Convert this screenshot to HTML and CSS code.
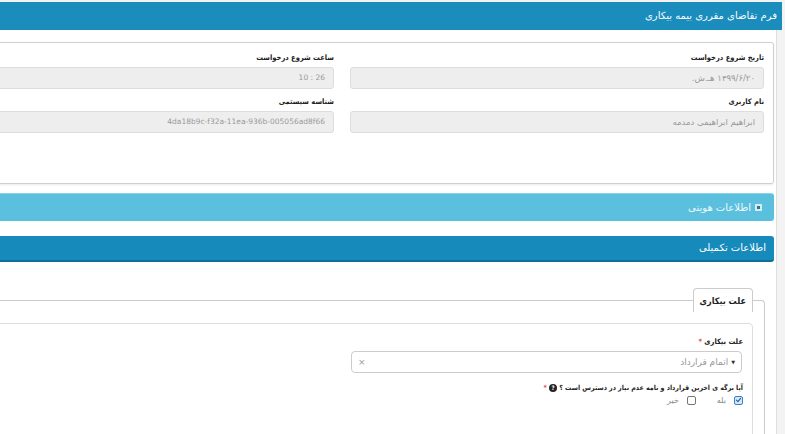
FILE: index.html
```html
<!DOCTYPE html>
<html lang="fa" dir="rtl">

<head>
    <meta charset="UTF-8">
    <meta name="viewport" content="width=device-width, initial-scale=1.0">
    <title>فرم تقاضای مقرری بیمه بیکاری</title>
    <link rel="stylesheet" href="styles.css">
</head>

<body>
    <div class="page">
        <!-- Page title -->
        <div class="page-header">فرم تقاضای مقرری بیمه بیکاری</div>

        <div class="page-body">
            <!-- Request info (read only) -->
            <div class="info-box">
                <div class="form-grid">
                    <div class="field">
                        <label>تاریخ شروع درخواست</label>
                        <div class="input">۱۳۹۹/۶/۲۰ هـ.ش.</div>
                    </div>
                    <div class="field">
                        <label>ساعت شروع درخواست</label>
                        <div class="input ltr">10 : 26</div>
                    </div>
                    <div class="field">
                        <label>نام کاربری</label>
                        <div class="input">ابراهیم ابراهیمی دمدمه</div>
                    </div>
                    <div class="field">
                        <label>شناسه سیستمی</label>
                        <div class="input ltr">4da18b9c-f32a-11ea-936b-005056ad8f66</div>
                    </div>
                </div>
            </div>

            <!-- Collapsible sections -->
            <div class="bar bar-light"><span class="toggle"></span>اطلاعات هویتی</div>
            <div class="bar bar-dark">اطلاعات تکمیلی</div>

            <fieldset class="section">
                <legend>علت بیکاری</legend>
                <div class="inner">
                    <label>علت بیکاری <span class="req">*</span></label>
                    <div class="select">
                        <span class="caret">▼</span>
                        <span class="select-text">اتمام قرارداد</span>
                        <span class="clear">×</span>
                    </div>

                    <label class="question">آیا برگه ی اخرین قرارداد و نامه عدم نیاز در دسترس است ؟ <span class="help">?</span> <span class="req">*</span></label>
                    <div class="options">
                        <span class="option">
                            <span class="check checked">
                                <svg viewBox="0 0 10 10" width="8" height="8"><path d="M2 5.2 L4.2 7.3 L8 2.8" fill="none" stroke="#1f5f9e" stroke-width="1.6" stroke-linecap="round" stroke-linejoin="round"/></svg>
                            </span>
                            بله
                        </span>
                        <span class="option">
                            <span class="check"></span>
                            خیر
                        </span>
                    </div>
                </div>
            </fieldset>
        </div>
    </div>
</body>

</html>
```

FILE: styles.css
```css
html,
body {
    margin: 0;
}

body {
    direction: rtl;
    font-family: Tahoma, "DejaVu Sans", sans-serif;
    font-size: 9px;
    color: #333;
    background: #f3f3f3;
    overflow: hidden;
}

/* wide form, the left side runs off screen */
.page {
    width: 880px;
    margin-right: 3px;
}

.page-header {
    margin-top: 2px;
    height: 28px;
    line-height: 28px;
    padding-right: 5px;
    background: #1a8dbd;
    color: #fff;
    font-size: 10px;
}

.page-body {
    background: #fff;
    margin-right: 5px;
    border-right: 1px solid #dedede;
    padding: 12px 2px 0 0;
}

.info-box {
    border: 1px solid #cfcfcf;
    border-radius: 3px;
    padding: 9px 9px 50px;
    box-shadow: 0 1px 2px rgba(0, 0, 0, 0.08);
}

.form-grid {
    display: grid;
    grid-template-columns: 414px 414px;
    column-gap: 16px;
    row-gap: 7px;
}

label {
    display: block;
    height: 12px;
    line-height: 12px;
    margin-bottom: 3px;
    font-family: "DejaVu Sans Condensed", "DejaVu Sans", sans-serif;
    font-weight: bold;
    font-size: 7.5px;
    color: #222;
}

.input {
    height: 22px;
    box-sizing: border-box;
    padding: 0 8px;
    line-height: 20px;
    border: 1px solid #ddd;
    border-radius: 3px;
    background: #eee;
    color: #999;
    font-size: 8.5px;
}

.ltr {
    direction: ltr;
    text-align: right;
    font-size: 7.5px;
}

/* section bars */
.bar {
    box-sizing: border-box;
    border-radius: 3px;
    color: #fff;
    font-size: 10px;
}

.bar-light {
    margin-top: 9px;
    height: 28px;
    line-height: 28px;
    padding-right: 12px;
    background: #5bc0de;
    border-top: 1px solid #8ad3ea;
    color: #eef9fd;
    display: flex;
    align-items: center;
}

.toggle {
    width: 7px;
    height: 7px;
    box-sizing: border-box;
    margin-left: 4px;
    background: #cfeef8;
    border: 2px solid #cfeef8;
    box-shadow: inset 0 0 0 2px #3d6f86;
}

.bar-dark {
    margin-top: 15px;
    height: 26px;
    line-height: 24px;
    padding-right: 8px;
    background: #168abb;
    border-bottom: 2px solid #0d6f98;
}

/* fieldset with tab-like legend */
.section {
    margin: 26px 0 0 0;
    margin-right: 9px;
    padding: 11px 11px 0 0;
    border: 1px solid #ccc;
    border-bottom: none;
    border-radius: 4px 4px 0 0;
    min-width: 0;
}

.section legend {
    height: 24px;
    line-height: 24px;
    box-sizing: border-box;
    padding: 0 6px;
    border: 1px solid #ccc;
    border-bottom: none;
    border-radius: 4px 4px 0 0;
    background: #fff;
    font-family: "DejaVu Sans Condensed", "DejaVu Sans", sans-serif;
    font-weight: bold;
    font-size: 9px;
    color: #222;
}

.inner {
    border: 1px solid #ddd;
    border-radius: 4px;
    padding: 12px 9px;
    min-height: 120px;
}

.req {
    color: #d9534f;
}

.select {
    height: 22px;
    box-sizing: border-box;
    display: flex;
    align-items: center;
    padding: 0 6px;
    border: 1px solid #ccc;
    border-radius: 4px;
    background: #fff;
    color: #999;
    font-size: 9px;
    width: 391px;
    margin-right: 1px;
}

.caret {
    color: #333;
    font-size: 5px;
    margin-left: 3px;
}

.clear {
    margin-right: auto;
    font-size: 9px;
    color: #999;
}

.question {
    margin-top: 9px;
    margin-bottom: 0;
    font-size: 7px;
}

.help {
    display: inline-block;
    width: 8px;
    height: 8px;
    line-height: 8px;
    border-radius: 50%;
    background: #222;
    color: #fff;
    font-size: 6px;
    text-align: center;
    vertical-align: middle;
}

.options {
    display: flex;
    gap: 21px;
    height: 12px;
    align-items: center;
}

.option {
    display: flex;
    align-items: center;
    gap: 8px;
    color: #888;
    font-size: 8px;
}

.check {
    width: 9px;
    height: 9px;
    box-sizing: border-box;
    border: 1px solid #777;
    border-radius: 2px;
    background: #fff;
    display: flex;
    align-items: center;
    justify-content: center;
}

.check.checked {
    border-color: #3b7fc4;
    background: #d4e8f8;
}
```
